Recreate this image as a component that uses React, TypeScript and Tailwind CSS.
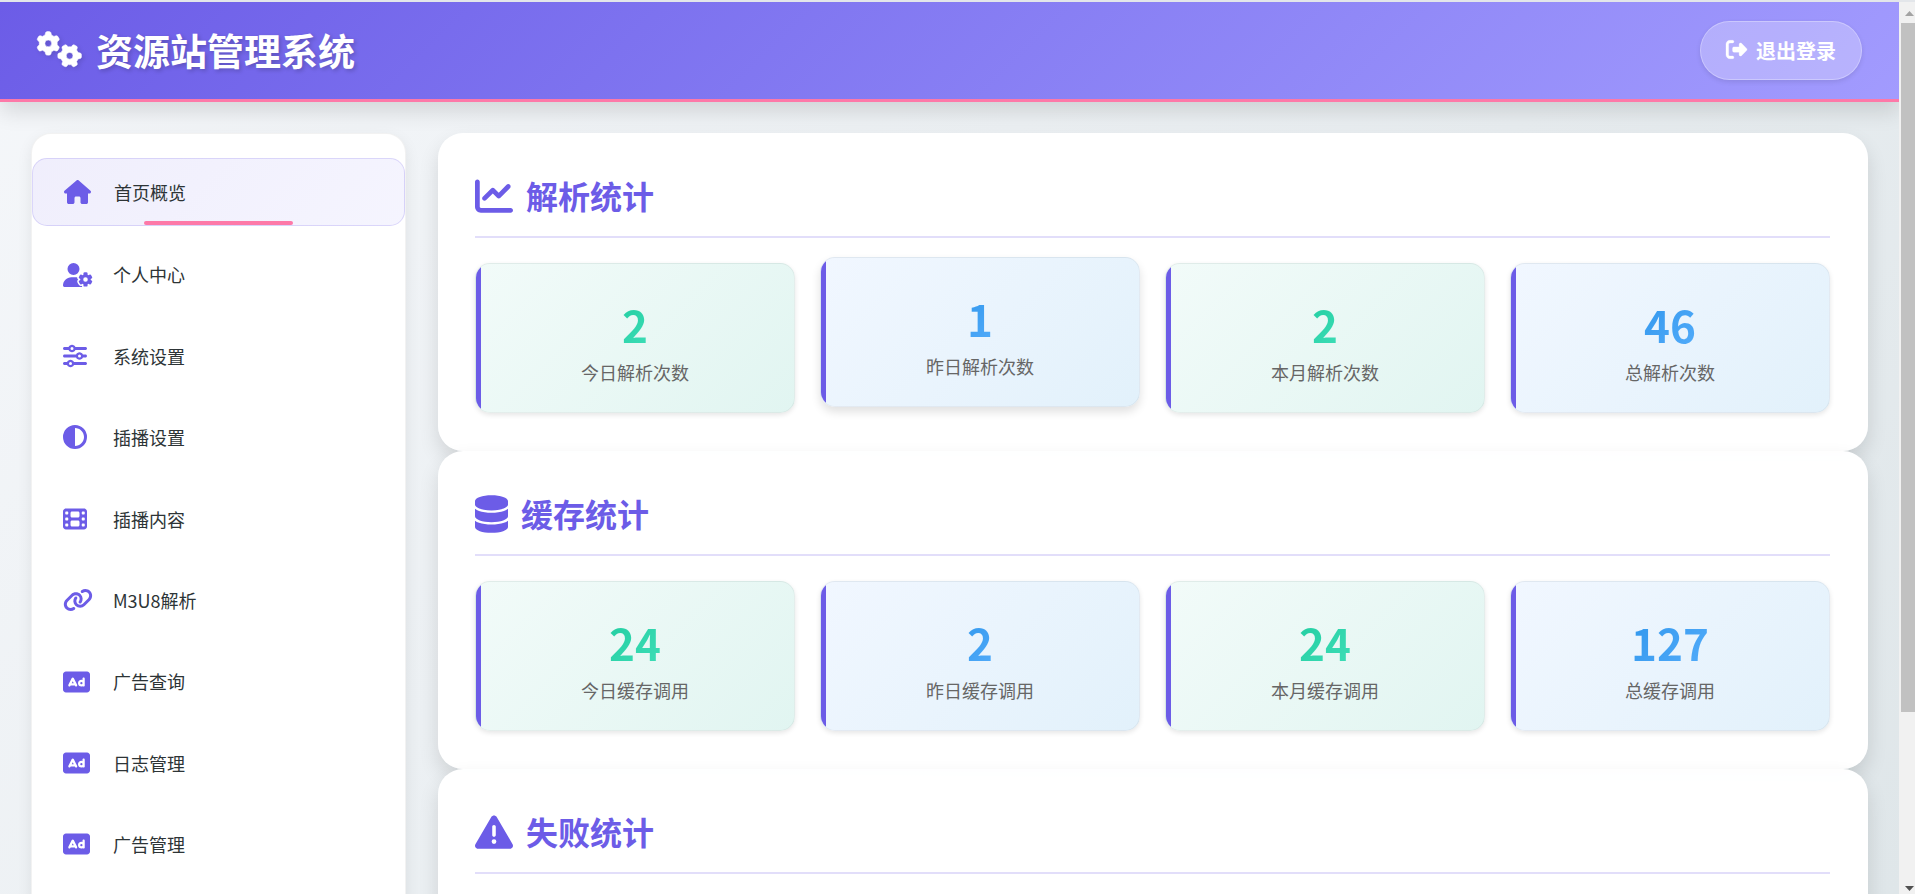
import type { ReactNode } from "react";
import type { IconType } from "react-icons";
import {
  FaGears,
  FaRightFromBracket,
  FaHouse,
  FaUserGear,
  FaSliders,
  FaCircleHalfStroke,
  FaFilm,
  FaLink,
  FaRectangleAd,
  FaChartLine,
  FaDatabase,
  FaTriangleExclamation,
} from "react-icons/fa6";

const navItems: { label: string; icon: IconType; iconWidth: string }[] = [
  { label: "首页概览", icon: FaHouse, iconWidth: "w-[27px]" },
  { label: "个人中心", icon: FaUserGear, iconWidth: "w-[30px]" },
  { label: "系统设置", icon: FaSliders, iconWidth: "w-6" },
  { label: "插播设置", icon: FaCircleHalfStroke, iconWidth: "w-6" },
  { label: "插播内容", icon: FaFilm, iconWidth: "w-6" },
  { label: "M3U8解析", icon: FaLink, iconWidth: "w-[30px]" },
  { label: "广告查询", icon: FaRectangleAd, iconWidth: "w-[27px]" },
  { label: "日志管理", icon: FaRectangleAd, iconWidth: "w-[27px]" },
  { label: "广告管理", icon: FaRectangleAd, iconWidth: "w-[27px]" },
];

type Stat = { value: number; label: string; raised?: boolean };

const sections: { title: string; icon: ReactNode; stats: Stat[] }[] = [
  {
    title: "解析统计",
    icon: <FaChartLine className="h-[38px] w-[38px]" />,
    stats: [
      { value: 2, label: "今日解析次数" },
      { value: 1, label: "昨日解析次数", raised: true },
      { value: 2, label: "本月解析次数" },
      { value: 46, label: "总解析次数" },
    ],
  },
  {
    title: "缓存统计",
    icon: <FaDatabase className="h-[38px] w-[33px]" />,
    stats: [
      { value: 24, label: "今日缓存调用" },
      { value: 2, label: "昨日缓存调用" },
      { value: 24, label: "本月缓存调用" },
      { value: 127, label: "总缓存调用" },
    ],
  },
  {
    title: "失败统计",
    icon: <FaTriangleExclamation className="h-[38px] w-[38px]" />,
    stats: [],
  },
];

function Header() {
  return (
    <header className="relative z-10 flex h-[100px] shrink-0 items-center justify-between border-b-3 border-[#fd79a8] bg-linear-135 from-[#6c5ce7] to-[#a29bfe] px-[37px] shadow-[0_10px_20px_rgba(0,0,0,0.12)]">
      <h1 className="flex items-center gap-[14px] text-[37px] leading-none font-bold text-white [text-shadow:2px_2px_4px_rgba(0,0,0,0.2)]">
        <FaGears className="mb-1 h-9 w-[45px] overflow-visible stroke-current stroke-[8px] drop-shadow-[2px_2px_2px_rgba(0,0,0,0.12)]" />
        资源站管理系统
      </h1>
      <button
        type="button"
        className="flex h-[59px] items-center gap-[9px] rounded-full border border-white/30 bg-white/25 px-[25px] text-[20px] font-semibold text-white shadow-[0_2px_5px_rgba(0,0,0,0.1)]"
      >
        <FaRightFromBracket className="mb-0.5 h-[21px] w-[21px] overflow-visible stroke-current stroke-[8px]" />
        退出登录
      </button>
    </header>
  );
}

function Sidebar() {
  return (
    <nav className="w-[375px] shrink-0 rounded-[20px] border border-black/5 bg-white py-6 shadow-[0_5px_15px_rgba(0,0,0,0.08)]">
      <ul className="flex flex-col gap-[15px]">
        {navItems.map(({ label, icon: Icon, iconWidth }, i) => (
          <li key={label}>
            <a
              href="#"
              className={[
                "relative flex items-center rounded-[15px] px-[31px] py-[17px] text-[18px] leading-[1.8] text-[#2d3436]",
                i === 0
                  ? "border border-[#6c5ce7]/20 bg-linear-135 from-[#6c5ce7]/10 to-[#a29bfe]/10"
                  : "",
              ].join(" ")}
            >
              <span className="mr-5 flex w-[30px] text-[#6c5ce7]">
                <Icon className={["h-6", iconWidth].join(" ")} />
              </span>
              {label}
              {i === 0 && (
                <span className="absolute bottom-0 left-[30%] h-1 w-2/5 rounded-full bg-[#fd79a8]" />
              )}
            </a>
          </li>
        ))}
      </ul>
    </nav>
  );
}

function StatCard({ stat, blue }: { stat: Stat; blue: boolean }) {
  return (
    <div
      className={[
        "relative flex h-[150px] flex-col items-center justify-center overflow-hidden rounded-[15px] border border-black/5 bg-linear-135 pt-1",
        blue ? "from-[#f1f7ff] to-[#e2f1fb]" : "from-[#f2fbf9] to-[#e1f5f1]",
        stat.raised
          ? "-translate-y-1.5 shadow-[0_5px_10px_rgba(0,0,0,0.12)]"
          : "shadow-[0_2px_5px_rgba(0,0,0,0.1)]",
      ].join(" ")}
    >
      <span className="absolute inset-y-0 left-0 w-[5px] bg-[#6c5ce7]" />
      <span
        className={[
          "bg-linear-135 bg-clip-text text-[44px] leading-16 font-semibold text-transparent",
          blue ? "from-[#2e96ec] to-[#54adfb]" : "from-[#1dcc9f] to-[#3fdfb9]",
        ].join(" ")}
      >
        {stat.value}
      </span>
      <span className="text-[18px] leading-8 text-[#666666]">{stat.label}</span>
    </div>
  );
}

function Section({ title, icon, children }: { title: string; icon: ReactNode; children: ReactNode }) {
  return (
    <section className="min-h-[318px] rounded-[25px] bg-white/98 pt-[37px] pr-[38px] pb-[38px] pl-[37px] shadow-[0_10px_20px_rgba(0,0,0,0.12)]">
      <h2 className="mb-[25px] flex h-[68px] items-start gap-[13px] border-b-2 border-[#6c5ce7]/20 text-[32px] leading-[50px] font-semibold text-[#6c5ce7]">
        <span className="flex h-[52px] items-center">{icon}</span>
        {title}
      </h2>
      <div className="grid grid-cols-4 gap-[25px]">{children}</div>
    </section>
  );
}

function ScrollTrack() {
  return (
    <div aria-hidden="true" className="flex w-4 shrink-0 flex-col items-end bg-[#f1f1f1] pl-0.5">
      <svg className="h-[21px] w-3.5" viewBox="0 0 14 21">
        <path d="M4 14h9L8.500 9z" fill="#a3a3a3" />
      </svg>
      <div className="h-[689px] w-3.5 bg-[#c1c1c1]" />
      <svg className="mt-auto h-[17px] w-3.5" viewBox="0 0 14 17">
        <path d="M4 9h9L8.500 14z" fill="#505050" />
      </svg>
    </div>
  );
}

export default function App() {
  return (
    <div className="flex h-screen flex-col overflow-hidden border-t-2 border-[#e3e6ea] font-['Noto_Sans_CJK_SC',sans-serif]">
      <div className="flex min-h-0 flex-1">
        <div className="flex min-w-0 flex-1 flex-col overflow-hidden bg-linear-135 from-[#f5f7fa] to-[#dfe6e9]">
          <Header />
          <div className="flex gap-8 px-[31px] pt-[31px]">
            <Sidebar />
            <main className="min-w-0 flex-1">
              {sections.map(({ title, icon, stats }) => (
                <Section key={title} title={title} icon={icon}>
                  {stats.map((stat, i) => (
                    <StatCard key={stat.label} stat={stat} blue={i % 2 === 1} />
                  ))}
                </Section>
              ))}
            </main>
          </div>
        </div>
        <ScrollTrack />
      </div>
    </div>
  );
}
